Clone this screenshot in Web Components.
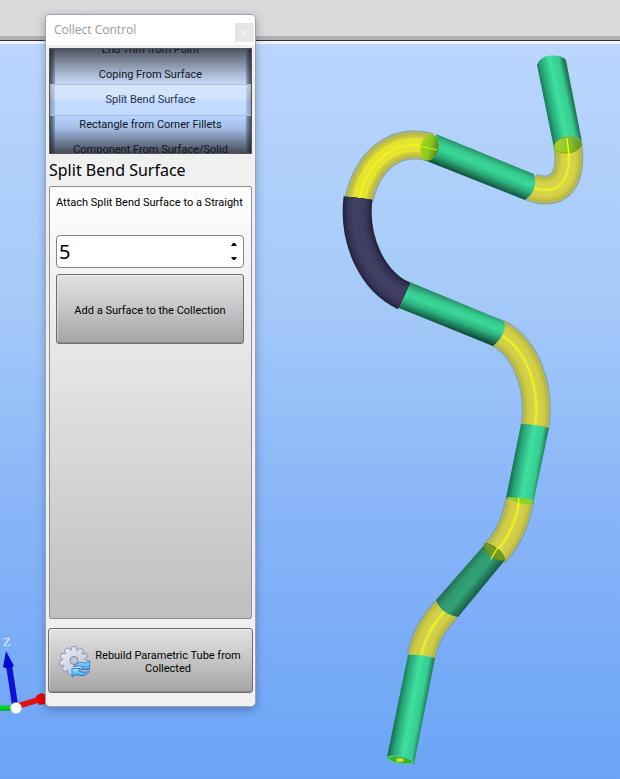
<!DOCTYPE html>
<html lang="en">
<head>
<meta charset="utf-8">
<title>Collect Control</title>
<style>
html, body { margin: 0; height: 100%; overflow: hidden; }
body { font: 11px/16px Roboto, "Noto Sans", sans-serif; color: #000; }
</style>
</head>
<body>
<cad-app></cad-app>

<template id="t-app">
<style>
:host { display: flex; flex-direction: column; height: 100vh; position: relative; }
header { height: 36px; flex: none; background: #d9d9d9; border-bottom: 4px solid #b0b0b0; }
.view { flex: 1; min-height: 0; border-top: 1px solid #2b2b36; display: flex; }
tube-view { flex: 1; }
collect-window { position: absolute; left: 45px; top: 14px; }
</style>
<header></header>
<main class="view"><tube-view></tube-view></main>
<collect-window heading="Collect Control">
  <wheel-picker></wheel-picker>
  <collect-group heading="Split Bend Surface">
    <number-field label="Attach Split Bend Surface to a Straight" value="5"></number-field>
    <push-button>Add a Surface to the Collection</push-button>
  </collect-group>
  <push-button slot="footer" class="rebuild"><gear-icon slot="icon"></gear-icon>Rebuild Parametric Tube from Collected</push-button>
</collect-window>
</template>

<template id="t-window">
<style>
:host { display: flex; flex-direction: column; box-sizing: border-box; width: 211px; height: 693px; background: #f0f0f0; border: 1px solid #9ba3ae; border-radius: 5px; box-shadow: 0 3px 9px rgba(20,40,90,.35); overflow: hidden; }
.bar { flex: none; height: 30px; background: #fff; display: flex; justify-content: space-between; align-items: center; padding: 0 1px 0 8px; font: 12px/16px "Open Sans", sans-serif; color: #999; }
h1 { font: inherit; margin: 0; }
button { width: 19px; height: 19px; margin-top: 4px; padding: 0; border: 0; background: #e6e6e6; display: grid; place-items: center; }
.body { flex: 1; min-height: 0; display: flex; flex-direction: column; padding: 3px 3px 0; }
.body ::slotted(collect-group) { flex: 1; }
footer { padding: 9px 2px 13px; }
</style>
<div class="bar"><h1></h1><button aria-label="Close"><svg width="5" height="5"><path d="M0 0L5 5M5 0L0 5" stroke="#f3f3f3" stroke-width="1.500"/></svg></button></div>
<div class="body"><slot></slot></div>
<footer><slot name="footer"></slot></footer>
</template>

<template id="t-wheel">
<style>
:host { display: block; position: relative; height: 106px; box-sizing: border-box; border: 1px solid #555; overflow: hidden; flex: none;
  background: linear-gradient(#4d5361 0, #7d889b 12%, #a9b9d3 24%, #c5d8f5 34%, #cfe2ff 50%, #b5d2fc 65%, #a3bfe8 76%, #74849f 88%, #454b57 100%); }
ul { position: relative; z-index: 1; box-sizing: border-box; margin: 0; padding: 0 0 4px; list-style: none; height: 100%; display: flex; flex-direction: column; justify-content: center; }
li { flex: none; height: 25px; line-height: 25px; text-align: center; color: #10141c; white-space: nowrap; }
li[aria-selected=true] { color: #27344d; }
.edges { position: absolute; inset: 0; background: linear-gradient(90deg, rgba(20,24,32,.7), rgba(60,75,100,.35) 5px, transparent 5px, transparent calc(100% - 5px), rgba(60,75,100,.35) calc(100% - 5px), rgba(20,24,32,.7)); }
.band { position: absolute; left: 0; right: 0; top: 35px; height: 30px; border: 1px solid #a9bdda; border-width: 1px 0; background: linear-gradient(rgba(225,237,255,.65), rgba(215,230,255,.5) 47%, rgba(182,211,253,.55) 50%, rgba(198,222,255,.55)); }
</style>
<div class="edges"></div><div class="band"></div>
<ul role="listbox" aria-label="Collection type">
<li role="option">End Trim from Point</li>
<li role="option">Coping From Surface</li>
<li role="option" aria-selected="true">Split Bend Surface</li>
<li role="option">Rectangle from Corner Fillets</li>
<li role="option">Component From Surface/Solid</li>
</ul>
</template>

<template id="t-group">
<style>
:host { display: flex; flex-direction: column; min-height: 0; }
h2 { margin: 0; font: 16px/32px "Noto Sans", sans-serif; }
section { flex: 1; border: 1px solid #8f8f8f; border-radius: 2px; background: linear-gradient(#fff 0, #ececec 30%, #bfbfbf 100%); padding: 7px 7px 0 6px; display: flex; flex-direction: column; gap: 6px; }
</style>
<h2></h2><section><slot></slot></section>
</template>

<template id="t-number">
<style>
:host { display: flex; flex-direction: column; gap: 23px; }
label { white-space: nowrap; line-height: 18px; }
.field { box-sizing: border-box; height: 33px; display: flex; border: 1px solid #858585; border-radius: 4px; background: #fff; }
input { flex: 1; min-width: 0; border: 0; outline: 0; background: none; padding: 0 2px; font: 20px/28px "Noto Sans", sans-serif; color: #000; }
.steps { width: 18px; display: flex; flex-direction: column; padding: 2px 0; }
.steps button { flex: 1; border: 0; padding: 0; background: none; display: grid; place-items: center; }
svg { display: block; }
</style>
<label for="n"></label>
<div class="field"><input id="n" type="text" inputmode="numeric">
<div class="steps"><button aria-label="Increase"><svg width="6" height="3"><path d="M0 3L2 0H4L6 3Z"/></svg></button><button aria-label="Decrease"><svg width="6" height="3"><path d="M0 0L2 3H4L6 0Z"/></svg></button></div></div>
</template>

<template id="t-button">
<style>
:host { display: block; }
button { width: 100%; height: 70px; display: flex; align-items: center; justify-content: center; gap: 3px; padding: 2px 10px 0; border: 1px solid #6d6d6d; border-radius: 3px; background: linear-gradient(#e2e2e2, #c8c8c8 45%, #a4a4a4); box-shadow: inset 1px 1px 0 rgba(255,255,255,.35), inset 0 -1px 0 rgba(0,0,0,.15); font: 11px/13px Roboto, "Noto Sans", sans-serif; color: #000; white-space: nowrap; }
:host(.rebuild) button { height: 65px; white-space: normal; }
</style>
<button><slot name="icon"></slot><span><slot></slot></span></button>
</template>

<template id="t-gear">
<style>:host { display: block; flex: none; } svg { display: block; }</style>
<svg width="32" height="32" viewBox="0 0 32 32">
<defs><linearGradient id="g" x1="0" y1="0" x2="1" y2="1"><stop offset="0" stop-color="#f3f4fc"/><stop offset="1" stop-color="#b3b8d2"/></linearGradient>
<linearGradient id="b" x1="0" y1="0" x2="0" y2="1"><stop offset="0" stop-color="#a5e6ff"/><stop offset="1" stop-color="#3a9df0"/></linearGradient></defs>
<g id="gear"></g>
<circle cx="15" cy="14.500" r="4" fill="#c6c7cc" stroke="#8084a5"/>
<path d="M14.500 20.500Q20 14 26.500 17.500L30.500 15V23.500H22L24.500 21Q20 18.500 14.500 20.500Z" fill="url(#b)" stroke="#1d72c4" stroke-width=".8"/>
<path d="M30.500 25.500Q25 32 17.500 28.500L13 31V22.500H21.500L19.500 25Q24 28 30.500 25.500Z" fill="url(#b)" stroke="#1d72c4" stroke-width=".8"/>
</svg>
</template>

<template id="t-tube">
<style>
:host { display: block; min-width: 0; overflow: hidden; border-top: 3px solid #f2f3f8; background: linear-gradient(#bad6fd 0, #a5caf9 35%, #8ab6f8 62%, #6ba4f6 100%); }
svg { display: block; width: 620px; height: 735px; }
text { font: 13px/16px "Liberation Serif", serif; fill: #e2edff; }
</style>
<svg viewBox="0 44 620 735" role="img" aria-label="Parametric tube model">
<defs>
<linearGradient id="s0"><stop offset="0" stop-color="#167052"/><stop offset=".18" stop-color="#27a477"/><stop offset=".5" stop-color="#3fe09e"/><stop offset=".82" stop-color="#36cc90"/><stop offset="1" stop-color="#1d7958"/></linearGradient>
<linearGradient id="s1" href="#s0" gradientUnits="userSpaceOnUse" x1="545" y1="108" x2="573" y2="102"/>
<linearGradient id="slope"><stop offset="0" stop-color="#278e68"/><stop offset=".22" stop-color="#37c98e"/><stop offset=".42" stop-color="#39d998"/><stop offset=".65" stop-color="#2db280"/><stop offset="1" stop-color="#0e4934"/></linearGradient>
<linearGradient id="s2" href="#slope" gradientUnits="userSpaceOnUse" x1="486" y1="154" x2="475" y2="181"/>
<linearGradient id="s3" href="#slope" gradientUnits="userSpaceOnUse" x1="457" y1="301" x2="447" y2="328"/>
<linearGradient id="s4" href="#s0" gradientUnits="userSpaceOnUse" x1="513" y1="462" x2="542" y2="467"/>
<linearGradient id="s5" gradientUnits="userSpaceOnUse" x1="460" y1="571" x2="482" y2="589"><stop offset="0" stop-color="#236c50"/><stop offset=".3" stop-color="#309a70"/><stop offset=".6" stop-color="#32a277"/><stop offset="1" stop-color="#175640"/></linearGradient>
<linearGradient id="s6" href="#s0" gradientUnits="userSpaceOnUse" x1="397" y1="706" x2="425" y2="711"/>
<linearGradient id="cap"><stop offset="0" stop-color="#a4d51a"/><stop offset=".5" stop-color="#8ac71f"/><stop offset="1" stop-color="#58841e"/></linearGradient>
</defs>
<path d="M405 280L504 321Q508 333 493 346L394 306Z" fill="url(#s3)"/>
<g id="bends" fill="none"></g>
<path d="M504 321Q508 333 493 346L484 342L494 317Z" fill="url(#s3)"/>
<path d="M537 65Q540 56 551 55.500Q562 55 566 60L582 142Q580 137 569 137Q556 139 554 148Z" fill="url(#s1)"/>
<path d="M554 147C555 140 562 137 569 137S581 139 582 144C580 150 574 153 566 153S555 151 554 147Z" fill="url(#cap)" fill-opacity=".9" stroke="#8ea51d"/>
<path d="M436 134L534 174Q539 190 525 200L424 160Q440 153 436 134Z" fill="url(#s2)"/>
<ellipse cx="429.500" cy="147.500" rx="9" ry="13.500" transform="rotate(14 429.500 147.500)" fill="url(#cap)"/>
<path d="M521 424Q535 424 549 428L533 504Q520 501 506 498Z" fill="url(#s4)"/>
<path d="M506.500 497Q519 497 533 500L532 505Q516 504 506.500 497Z" fill="#8bd329"/>
<path d="M486 543Q493 554 505 560L458 617Q441 614 436 600Z" fill="url(#s5)"/>
<path d="M486 543Q502 548 505 560Q491 562 484 546Z" fill="#719a20" stroke="#628722"/>
<path d="M408 655Q421 654 435 658L414 764Q399 765 387 757Z" fill="url(#s6)"/>
<ellipse cx="400.500" cy="760" rx="13" ry="3.500" transform="rotate(9 400.500 760)" fill="#47aa36" stroke="#3fdd9a"/>
<ellipse cx="400" cy="760" rx="4" ry="2" fill="#b9e625"/>
<g fill="none" stroke="#f8ff08" stroke-width="1.200">
<path d="M567 138L569 156"/><path d="M420 146L437 150" stroke="#c7f600"/><path d="M519 498L518 508M498 547L491 559"/></g>
<path d="M0 708H14" stroke="#00d51b" stroke-width="5"/><path d="M0 710H12" stroke="#079614"/>
<path d="M15 705L9 665" stroke="#1010d8" stroke-width="6"/><path d="M6 651L14 666Q9 670 3 667Z" fill="#0909ce"/>
<path d="M18 706L38 700" stroke="#e01212" stroke-width="6"/><path d="M36 696L41 693L46 695V704L39 705Z" fill="#e90000"/>
<circle cx="16" cy="708" r="5.500" fill="#fff" stroke="#ccd3dc" stroke-width=".6"/>
<text x="3" y="646">Z</text>
</svg>
</template>

<script>
function define(name, id, setup) {
  customElements.define(name, class extends HTMLElement {
    constructor() {
      super();
      this.attachShadow({ mode: "open" }).append(document.getElementById(id).content.cloneNode(true));
    }
    connectedCallback() { if (setup) setup(this, this.shadowRoot); }
  });
}
const NS = "http://www.w3.org/2000/svg";
function stroke(parent, d, color, width, opacity = 1) {
  const p = document.createElementNS(NS, "path");
  p.setAttribute("d", d);
  p.setAttribute("stroke", color);
  p.setAttribute("stroke-width", width);
  p.setAttribute("stroke-opacity", opacity);
  parent.append(p);
}
define("gear-icon", "t-gear", (el, root) => {
  let d = "";
  for (let i = 0; i < 11; i++) {
    const a = i * 2 * Math.PI / 11 - 1.57;
    [[-.27, 11], [-.15, 14.5], [.15, 14.5], [.27, 11]].forEach(([o, r]) => {
      d += (d ? "L" : "M") + (15 + r * Math.cos(a + o)).toFixed(1) + " " + (15 + r * Math.sin(a + o)).toFixed(1);
    });
  }
  const p = document.createElementNS(NS, "path");
  p.setAttribute("d", d + "Z");
  p.setAttribute("fill", "url(#g)");
  p.setAttribute("stroke", "#8e93b8");
  root.getElementById("gear").replaceChildren(p);
});
define("tube-view", "t-tube", (el, root) => {
  const g = root.getElementById("bends");
  g.replaceChildren();
  const bends = [
    ["M568 146C572 176 562 190 545 190Q538 190 531 187", "#d6d34a"],
    ["M430 147C395 138 368 160 359 199", "#e6e52c"],
    ["M498 333C525 347 541 385 535 427", "#d3cf48"],
    ["M520 499C516 522 508 540 494 554", "#d1ce4b"],
    ["M448 608C433 623 425 637 421 657", "#d1ce4b"]
  ];
  for (const [d, c] of bends) {
    stroke(g, d, "#8a9c78", 29, .75);
    stroke(g, d, "#b4bd72", 26);
    stroke(g, d, "#bbb73c", 24);
    stroke(g, d, "#c6c33f", 21);
    stroke(g, d, "#cdca42", 18);
    stroke(g, d, c, 14);
    stroke(g, d, "#e6e43c", 5, .5);
    stroke(g, d, "#f6fb12", 1.2);
  }
  const dark = "M358 198C353 240 372 281 404 296";
  [["#211f38", 29], ["#2b2946", 27], ["#343253", 23], ["#3a385b", 18], ["#403e62", 11]].forEach(([c, w]) => stroke(g, dark, c, w));
});
define("push-button", "t-button");
define("number-field", "t-number", (el, root) => {
  root.querySelector("label").textContent = el.getAttribute("label");
  const input = root.querySelector("input");
  input.value = el.getAttribute("value");
  root.querySelectorAll("button").forEach((b, i) => { b.onclick = () => { input.value = Number(input.value) + (i ? -1 : 1); }; });
});
define("wheel-picker", "t-wheel");
define("collect-group", "t-group", (el, root) => { root.querySelector("h2").textContent = el.getAttribute("heading"); });
define("collect-window", "t-window", (el, root) => { root.querySelector("h1").textContent = el.getAttribute("heading"); });
define("cad-app", "t-app");
</script>
</body>
</html>
